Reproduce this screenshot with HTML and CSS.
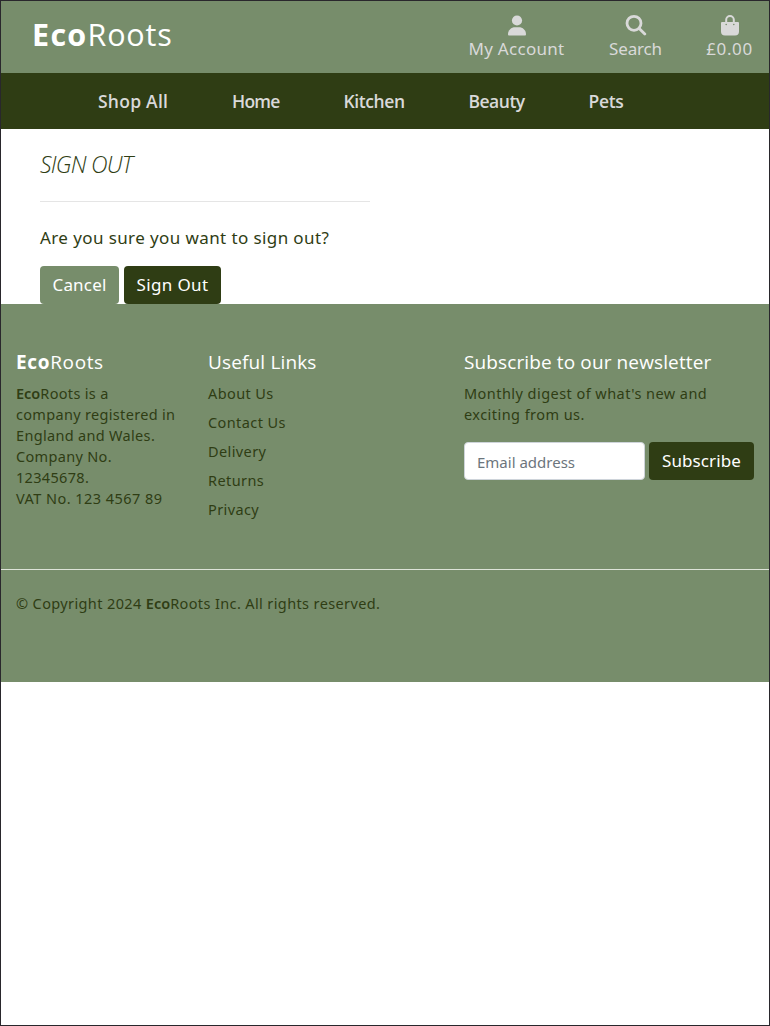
FILE: index.html
```
<!DOCTYPE html>
<html lang="en">
<head>
<meta charset="utf-8">
<title>EcoRoots - Sign Out</title>
<link rel="stylesheet" href="styles.css">
</head>
<body>
<div class="page">
  <header class="topbar">
    <a class="logo"><b>Eco</b>Roots</a>
    <nav class="tools">
      <a class="tool account">
        <svg class="icon" viewBox="0 0 20 22"><circle cx="10" cy="6.500" r="5.1"/><path d="M1 20.200C1 15.900 4.400 13.200 8 13.200h4c3.600 0 7 2.700 7 7 0 .8-.4 1.300-1.200 1.300H2.200C1.400 21.500 1 21 1 20.200z"/></svg>
        <span>My Account</span>
      </a>
      <a class="tool search">
        <svg class="icon" viewBox="0 0 22 22"><g fill="none" stroke="currentColor" stroke-width="2.800"><circle cx="9" cy="9.300" r="7"/><path d="M14.200 14.500l5.600 5.600" stroke-linecap="round"/></g></svg>
        <span>Search</span>
      </a>
      <a class="tool bag">
        <svg class="icon" viewBox="0 0 20 22"><path fill-rule="evenodd" d="M5.200 8V5.800a4.800 4.800 0 0 1 9.600 0V8H18q1 0 1 1v8.500q0 4-4 4H5q-4 0-4-4V9q0-1 1-1zM7.200 8h5.600V5.800a2.800 2.800 0 0 0-5.600 0zM6.200 9.700a.8.8 0 1 0 0 1.600.8.8 0 0 0 0-1.600zM13.800 9.700a.8.8 0 1 0 0 1.600.8.8 0 0 0 0-1.600z"/></svg>
        <span>£0.00</span>
      </a>
    </nav>
  </header>
  <nav class="menu">
    <a class="all">Shop All</a><a class="home">Home</a><a class="kitchen">Kitchen</a><a class="beauty">Beauty</a><a class="pets">Pets</a>
  </nav>
  <main class="content">
    <h1>SIGN OUT</h1>
    <hr>
    <p>Are you sure you want to sign out?</p>
    <div class="actions"><button class="btn light">Cancel</button><button class="btn signout">Sign Out</button></div>
  </main>
  <footer class="footer">
    <div class="columns">
      <section>
        <h2 class="brand"><b>Eco</b>Roots</h2>
        <p><b>Eco</b>Roots is a<br>company registered in<br>England and Wales.<br>Company No.<br>12345678.<br><span class="vat">VAT No. 123 4567 89</span></p>
      </section>
      <section>
        <h2 class="links-title">Useful Links</h2>
        <ul><li>About Us</li><li>Contact Us</li><li>Delivery</li><li>Returns</li><li>Privacy</li></ul>
      </section>
      <section>
        <h2>Subscribe to our newsletter</h2>
        <p class="digest">Monthly digest of what's new and<br>exciting from us.</p>
        <form class="signup"><input type="email" placeholder="Email address"><button type="button" class="btn subscribe">Subscribe</button></form>
      </section>
    </div>
    <p class="copyright">© Copyright 2024 <b>Eco</b>Roots Inc. All rights reserved.</p>
  </footer>
</div>
</body>
</html>
```

FILE: styles.css
```
* { box-sizing: border-box; }
body { margin: 0; font-family: "Noto Sans", "Open Sans", sans-serif; color: #2f3d14; }
h1, h2, p, ul { margin: 0; padding: 0; }
.page { height: 1026px; border: 1px solid #29272c; background: #fff; }

.topbar { display: flex; justify-content: space-between; height: 72px; padding: 0 16px 0 31px; background: #778d6b; }
.logo { font: 400 30.500px/67px "Open Sans", sans-serif; letter-spacing: .8px; color: #fff; white-space: nowrap; }
.logo b { font-weight: 700; letter-spacing: 1.3px; }
.tools { display: flex; gap: 44px; padding-top: 13px; color: #d9d9d9; }
.tool { display: flex; flex-direction: column; align-items: center; font-size: 17px; line-height: 25px; white-space: nowrap; }
.icon { height: 22px; fill: currentColor; display: block; }
.account { width: 97px; letter-spacing: .3px; }
.search { width: 53px; letter-spacing: -.15px; }
.bag { width: 47px; letter-spacing: .6px; }

.menu { display: flex; gap: 64px; height: 56px; padding-left: 97px; background: #2f3d14; color: #d9d9d9; font: 600 17.500px/56px "Open Sans", sans-serif; white-space: nowrap; }
.all { width: 70px; letter-spacing: .25px; }
.home { width: 47.500px; letter-spacing: -.75px; }
.kitchen { width: 61px; letter-spacing: -.4px; }
.beauty { width: 56px; letter-spacing: -.5px; }
.pets { width: 35px; letter-spacing: -.3px; }

.content { height: 175px; padding: 18px 39px 0; }
h1 { font-family: "Open Sans", sans-serif; font-size: 23px; font-weight: 300; font-style: italic; line-height: 34px; letter-spacing: -.75px; }
hr { width: 330px; height: 1px; margin: 20px 0 23px; border: 0; background: #e5e5e5; }
.content p { font-size: 17px; line-height: 26px; letter-spacing: .4px; }
.actions { display: flex; gap: 5px; margin-top: 15px; }
.btn { height: 38px; padding: 0; border: 0; border-radius: 4px; background: #2f3d14; color: #fff; font: 400 17px/38px "Noto Sans", sans-serif; white-space: nowrap; }
.light { width: 79px; background: #778d6b; letter-spacing: .2px; }
.signout { width: 97px; letter-spacing: .35px; }

.footer { height: 378px; background: #778d6b; }
.columns { display: grid; grid-template-columns: 3fr 4fr 5fr; height: 266px; padding-top: 47px; border-bottom: 1px solid #dde3d8; }
section { padding-left: 15px; white-space: nowrap; }
h2 { margin-bottom: 9px; color: #fff; font-family: "Open Sans", sans-serif; font-size: 19px; font-weight: 400; line-height: 23px; letter-spacing: .12px; }
.brand { letter-spacing: .6px; }
.brand b { font-weight: 700; letter-spacing: .7px; }
.links-title { letter-spacing: .15px; }
.footer p, .footer ul { font-size: 14.500px; line-height: 21px; letter-spacing: .32px; }
.footer ul { letter-spacing: .4px; }
.footer p b { font-weight: 600; letter-spacing: 0; }
.footer .vat { letter-spacing: .45px; }
.footer ul { list-style: none; }
.footer li { margin-bottom: 8px; }
.footer .digest { letter-spacing: .45px; }
.signup { display: flex; gap: 4px; margin-top: 17px; }
.signup input { width: 181px; height: 38px; padding: 2px 12px 0; border: 1px solid #ced4da; border-radius: 4px; background: #fff; font: 400 15px "Noto Sans", sans-serif; letter-spacing: 0; }
.signup input::placeholder { color: #6c757d; opacity: 1; }
.subscribe { width: 105px; letter-spacing: .1px; }
.footer .copyright { padding: 23px 15px 0; letter-spacing: .38px; }
```
